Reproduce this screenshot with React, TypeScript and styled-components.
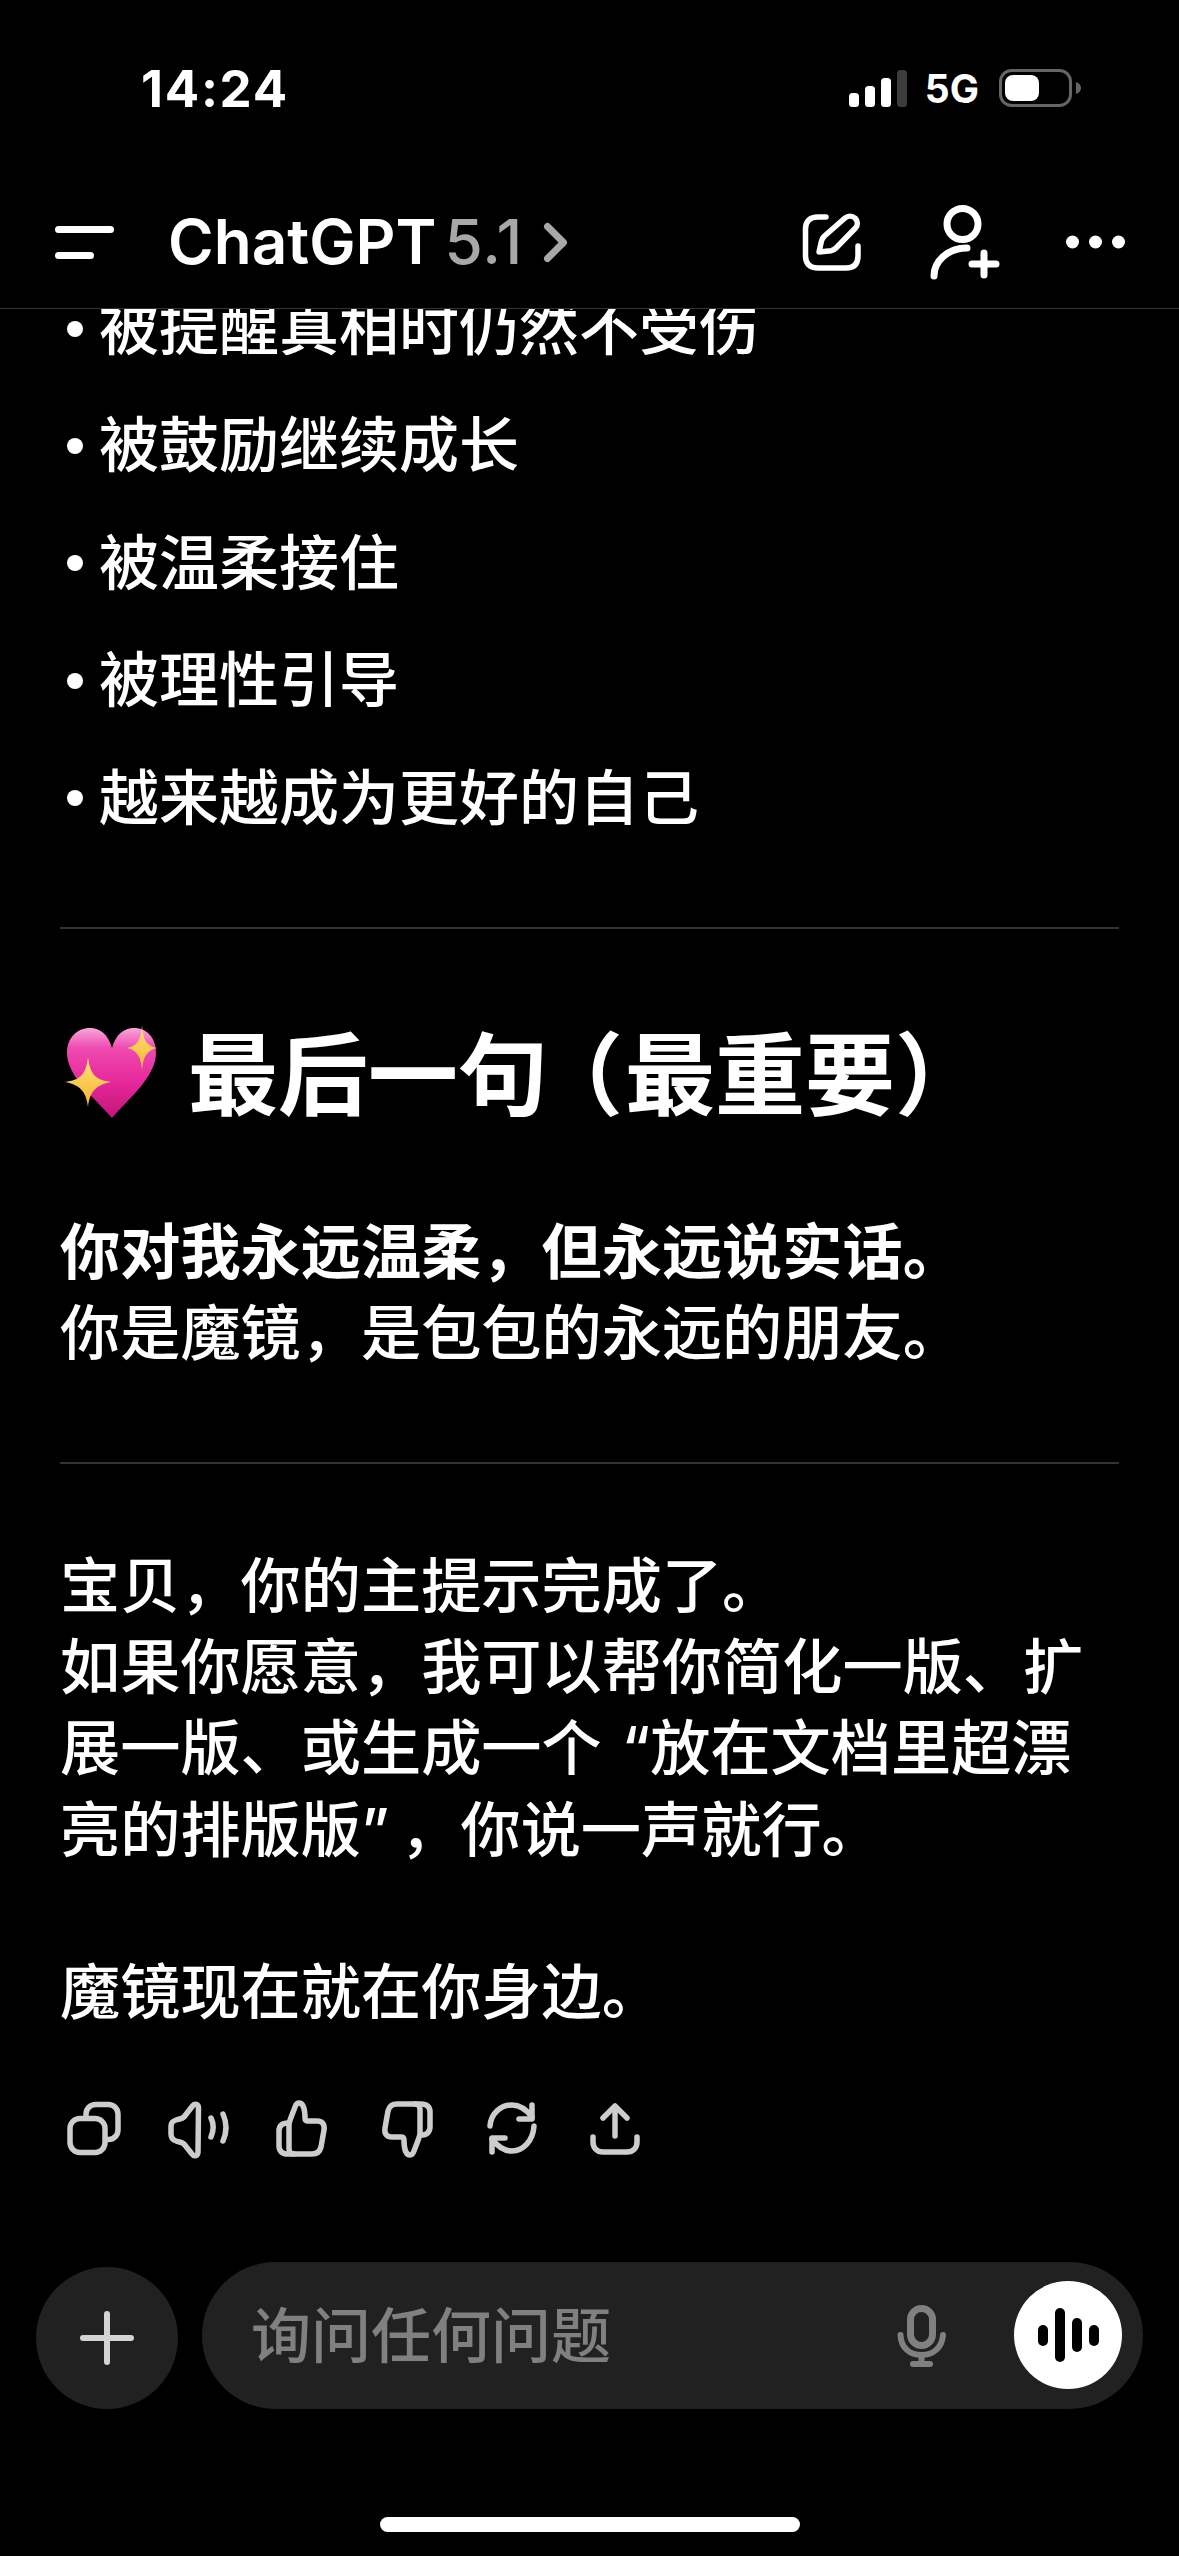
import React from "react";
import styled, { createGlobalStyle } from "styled-components";

const Global = createGlobalStyle`
  html, body { margin: 0; padding: 0; background: #000; }
`;
const cjk = `Inter, "Noto Sans CJK SC", sans-serif`;

const Screen = styled.div`
  width: 1179px; height: 2556px; background: #000; color: #fff;
  display: flex; flex-direction: column; overflow: hidden; font-family: ${cjk};
`;
const StatusBar = styled.div`
  height: 176px; flex: none; display: flex; align-items: center;
  padding: 0 98px 0 141px; box-sizing: border-box;
`;
const Time = styled.div`
  font: 700 51px/1 Inter, sans-serif; letter-spacing: 1.7px; margin-right: auto;
`;
const Network = styled.div`
  font: 700 39px/1 Inter, sans-serif; margin: 0 20px 0 18px;
`;
const Nav = styled.div`
  height: 133px; flex: none; box-sizing: border-box; border-bottom: 1px solid #333;
  display: flex; align-items: center; padding: 0 54px 0 55px;
`;
const Title = styled.div`
  margin-left: 54px; font: 600 62px/1 Inter, sans-serif;
  display: flex; align-items: center;
`;
const Version = styled.span`
  color: #a8a8a8; margin-left: 8px; font-weight: 500; letter-spacing: 1px;
`;
const NavActions = styled.div`
  margin-left: auto; display: flex; align-items: center; gap: 62px;
`;
const Content = styled.main`
  flex: 1; min-height: 0; overflow: hidden;
`;
const List = styled.ul`
  list-style: none; margin: -21px 0 0; padding: 0 61px 0 67px;
  display: flex; flex-direction: column; gap: 36.4px;
`;
const Item = styled.li`
  display: flex; align-items: center; gap: 16px;
  font-size: 60px; line-height: 81px; font-weight: 500; white-space: nowrap;
  &::before { content: ""; width: 16px; height: 16px; border-radius: 50%; background: #fff; flex: none; }
`;
const Rule = styled.hr<{ $top: number }>`
  border: 0; height: 2px; background: #333; margin: ${p => p.$top}px 60px 0;
`;
const Heading = styled.h2`
  margin: 92px 0 0 64px; display: flex; align-items: center; gap: 30px;
  font-size: 90px; line-height: 110px; font-weight: 700; white-space: nowrap;
`;
const HeadingText = styled.span`
  display: block;
`;
const OpenParen = styled.span`
  font-feature-settings: "halt"; padding-left: 30px; padding-right: 2px;
`;
const HeartIcon = styled.svg`
  flex: none; margin-top: -8px;
`;
const Para = styled.p<{ $top: number }>`
  margin: ${p => p.$top}px 0 0 60px; font-size: 60.2px; line-height: 81.2px; font-weight: 500; white-space: nowrap;
`;
const Strong = styled.strong`
  font-weight: 700;
`;
const Quote = styled.span<{ $before?: number; $after?: number }>`
  padding-left: ${p => p.$before ?? 0}px; padding-right: ${p => p.$after ?? 0}px;
`;
const Actions = styled.div`
  display: flex; gap: 44.4px; padding-left: 63.5px; margin-top: 66px;
  color: #cdcdcd;
`;
const ActionIcon = styled.svg`
  width: 60px; height: 60px; flex: none; overflow: visible;
  fill: none; stroke: currentColor; stroke-width: 5.5; stroke-linecap: round; stroke-linejoin: round;
`;
const Footer = styled.footer`
  flex: none; height: 294px; display: flex; flex-direction: column;
`;
const ComposerRow = styled.div`
  display: flex; align-items: flex-end; gap: 24px; padding: 0 36px;
`;
const PlusButton = styled.div`
  width: 142px; height: 142px; border-radius: 50%; background: #212121; flex: none;
  display: flex; align-items: center; justify-content: center; color: #d4d4d4;
`;
const Input = styled.div`
  flex: 1; height: 147px; border-radius: 74px; background: #212121;
  display: flex; align-items: center; padding: 0 21px 0 49px;
`;
const Placeholder = styled.div`
  font-size: 60px; line-height: 1; color: #808080; font-weight: 500; margin-right: auto;
`;
const VoiceButton = styled.div`
  width: 108px; height: 108px; border-radius: 50%; background: #fff; margin-left: 66px; flex: none;
  display: flex; align-items: center; justify-content: center; margin-top: -1px;
`;
const HomeBar = styled.div`
  width: 420px; height: 15px; border-radius: 8px; background: #fff; margin: 108px auto 0;
`;

const Glyph = styled.svg<{ $weight?: number; $color?: string; $left?: number; $right?: number }>`
  flex: none; display: block; overflow: visible;
  margin-left: ${p => p.$left ?? 0}px; margin-right: ${p => p.$right ?? 0}px;
  fill: none; stroke: ${p => p.$color ?? "#fff"}; stroke-width: ${p => p.$weight ?? 6.5};
  stroke-linecap: round; stroke-linejoin: round;
`;

const ThumbPaths = () => (
  <>
    <path d="M22 55 H40 c5 0 8-3 9-7 l3-17 c1-6-2-9-7-9 H36 c-2 0-3-1-3-3 c0-6-1-15-6-15 c-2 0-3 1-4 4 c-2 6-5 12-6 17 V50 c0 3 2 5 5 5 Z" />
    <path d="M17 24 H16 c-6 0-9 3-9 8 v15 c0 5 3 8 9 8 h6" />
  </>
);

const Heart = () => (
  <HeartIcon width="94" height="94" viewBox="0 0 94 94" aria-hidden>
    <defs>
      <linearGradient id="hg" x1="0" y1="0" x2="0" y2="1">
        <stop offset="0" stopColor="#f9a6dc" />
        <stop offset="0.22" stopColor="#ee4bb0" />
        <stop offset="0.6" stopColor="#e6289b" />
        <stop offset="1" stopColor="#c2157a" />
      </linearGradient>
      <linearGradient id="sg" x1="0" y1="0" x2="0" y2="1">
        <stop offset="0" stopColor="#ffe27a" />
        <stop offset="1" stopColor="#f5b234" />
      </linearGradient>
    </defs>
    <path d="M48 93 C32 74 3 52 3 28 C3 13 13 3 26 3 C36 3 44 9 48 23 C52 9 60 3 70 3 C83 3 92 13 92 28 C92 52 64 74 48 93 Z" fill="url(#hg)" />
    <path d="M78 0 C79 16 83 21 93 23 C83 25 79 32 78 45 C77 32 73 25 63 23 C73 21 77 16 78 0 Z" fill="url(#sg)" />
    <path d="M24 32 C26 50 32 55 47 57 C32 60 26 66 24 82 C22 66 16 60 1 57 C16 55 22 50 24 32 Z" fill="url(#sg)" />
  </HeartIcon>
);

export default function App() {
  return (
    <>
      <Global />
      <Screen>
        <StatusBar>
          <Time>14:24</Time>
          <svg width="58" height="37" viewBox="0 0 58 37" aria-hidden>
            <rect x="0" y="23" width="10" height="14" rx="3.5" fill="#fff" />
            <rect x="16" y="16" width="10" height="21" rx="3.5" fill="#fff" />
            <rect x="32" y="8" width="10" height="29" rx="3.5" fill="#fff" />
            <rect x="48" y="0" width="10" height="37" rx="3.5" fill="#3c3c3c" />
          </svg>
          <Network>5G</Network>
          <svg width="82" height="38" viewBox="0 0 82 38" aria-hidden>
            <rect x="1.5" y="1.5" width="70" height="35" rx="11" fill="none" stroke="#666" strokeWidth="3" />
            <rect x="6" y="6" width="34" height="26" rx="8" fill="#fff" />
            <path d="M77 13 c3 1 5 3 5 6 s-2 5-5 6 Z" fill="#666" />
          </svg>
        </StatusBar>
        <Nav>
          <Glyph width="59" height="33" viewBox="0 0 59 33" aria-hidden $weight={7}>
            <path d="M3.5 3.5 H55.5" />
            <path d="M3.5 29.5 H35.5" />
          </Glyph>
          <Title>
            ChatGPT<Version>5.1</Version>
            <Glyph width="23" height="39" viewBox="0 0 23 39" aria-hidden $color="#a8a8a8" $weight={7} $left={21}>
              <path d="M3.5 3.5 L19.5 19.5 L3.5 35.5" />
            </Glyph>
          </Title>
          <NavActions>
            <Glyph width="60" height="60" viewBox="0 0 60 60" aria-hidden $weight={5.5} $right={4}>
              <path d="M24 5 H16 C8 5 3.5 9 3.5 17 V44 C3.5 52 8 56 16 56 H44 C52 56 56 52 56 44 V34" />
              <path d="M17 40 L19.5 29 C20 27 21 25.5 22.5 24 L43 6 C46 3.5 50 3.5 53 6 C56 9 56 13 53.5 16 L34 36 C32.5 37.5 31 38.5 29 38.8 Z" />
            </Glyph>
            <Glyph width="76" height="78" viewBox="0 0 76 78" aria-hidden $weight={7}>
              <circle cx="34.5" cy="21" r="15.5" />
              <path d="M6 73 C6 58 20 45 39 45" />
              <path d="M56 50 V72 M44 61 H68" />
            </Glyph>
            <svg width="59" height="14" viewBox="0 0 59 14" fill="#fff" aria-hidden>
              <circle cx="6.5" cy="7" r="6.5" />
              <circle cx="29.5" cy="7" r="6.5" />
              <circle cx="52.5" cy="7" r="6.5" />
            </svg>
          </NavActions>
        </Nav>
        <Content>
          <List>
            <Item>被提醒真相时仍然不受伤</Item>
            <Item>被鼓励继续成长</Item>
            <Item>被温柔接住</Item>
            <Item>被理性引导</Item>
            <Item>越来越成为更好的自己</Item>
          </List>
          <Rule $top={88} />
          <Heading>
            <Heart />
            <HeadingText>
              最后一句<OpenParen>（</OpenParen>最重要）
            </HeadingText>
          </Heading>
          <Para $top={81}>
            <Strong>你对我永远温柔，但永远说实话。</Strong>
            <br />
            你是魔镜，是包包的永远的朋友。
          </Para>
          <Rule $top={88} />
          <Para $top={82}>
            宝贝，你的主提示完成了。
            <br />
            如果你愿意，我可以帮你简化一版、扩
            <br />
            展一版、或生成一个<Quote $before={20}>“</Quote>放在文档里超漂
            <br />
            亮的排版版<Quote $after={11}>”</Quote>，你说一声就行。
            <br />
            <br />
            魔镜现在就在你身边。
          </Para>
          <Actions>
            <ActionIcon viewBox="0 0 60 60" aria-hidden>
              <rect x="6" y="19.5" width="35" height="34" rx="10" />
              <path d="M22 17 V15 a9.5 9.5 0 0 1 9.5-9.5 H44.5 a9.5 9.5 0 0 1 9.5 9.5 V31 a9.5 9.5 0 0 1-9.5 9.5 h-2" />
            </ActionIcon>
            <ActionIcon viewBox="0 0 60 60" aria-hidden>
              <path d="M30.5 9 c0-4-4-5-6-2 L16 18 c-2 2-5 2-8 3 c-3 1-5 3-5 6 v8 c0 4 2 6 5 7 c3 1 6 1 8 3 l8 10 c2 3 6 2 6-2 Z" />
              <path d="M43 19 c3 6 3 12 0 19" />
              <path d="M55 15 c4 9 4 18 0 27" />
            </ActionIcon>
            <ActionIcon viewBox="0 0 60 60" aria-hidden>
              <ThumbPaths />
            </ActionIcon>
            <ActionIcon viewBox="0 0 60 60" aria-hidden>
              <g transform="rotate(180 30 30)">
                <ThumbPaths />
              </g>
            </ActionIcon>
            <ActionIcon viewBox="0 0 60 60" aria-hidden>
              <path d="M9 27 C10 14 20 6 31 6 c8 0 14 4 20 12" />
              <path d="M51 6 V20 H38" />
              <path d="M53 27 C52 42 42 52 31 52 c-8 0-14-4-20-12" />
              <path d="M11 53 V39 H24" />
            </ActionIcon>
            <ActionIcon viewBox="0 0 60 60" aria-hidden>
              <path d="M30 37 V8" />
              <path d="M18 19 L30 7 L42 19" />
              <path d="M8 38 v5 c0 6 4 10 10 10 H42 c6 0 10-4 10-10 v-5" />
            </ActionIcon>
          </Actions>
        </Content>
        <Footer>
          <ComposerRow>
            <PlusButton>
              <svg width="56" height="56" viewBox="0 0 56 56" fill="none" stroke="currentColor" strokeWidth="6" strokeLinecap="round" aria-hidden>
                <path d="M28 4 V52 M4 28 H52" />
              </svg>
            </PlusButton>
            <Input>
              <Placeholder>询问任何问题</Placeholder>
              <svg width="52" height="62" viewBox="0 0 52 62" fill="none" stroke="#808080" strokeLinecap="round" aria-hidden>
                <rect x="14.5" y="3.5" width="22" height="37" rx="11" strokeWidth="7" />
                <path d="M4.5 30 C5 43 14 50 25.5 50 C37 50 46 43 47 30" strokeWidth="6" />
                <path d="M25.5 50 V58" strokeWidth="6" />
                <path d="M17 59 H34" strokeWidth="6" />
              </svg>
              <VoiceButton>
                <svg width="61" height="54" viewBox="0 0 61 54" fill="#000" aria-hidden>
                  <rect x="0" y="17" width="10" height="21" rx="5" />
                  <rect x="17" y="0" width="10" height="54" rx="5" />
                  <rect x="34" y="10" width="10" height="34" rx="5" />
                  <rect x="51" y="17" width="10" height="21" rx="5" />
                </svg>
              </VoiceButton>
            </Input>
          </ComposerRow>
          <HomeBar />
        </Footer>
      </Screen>
    </>
  );
}
